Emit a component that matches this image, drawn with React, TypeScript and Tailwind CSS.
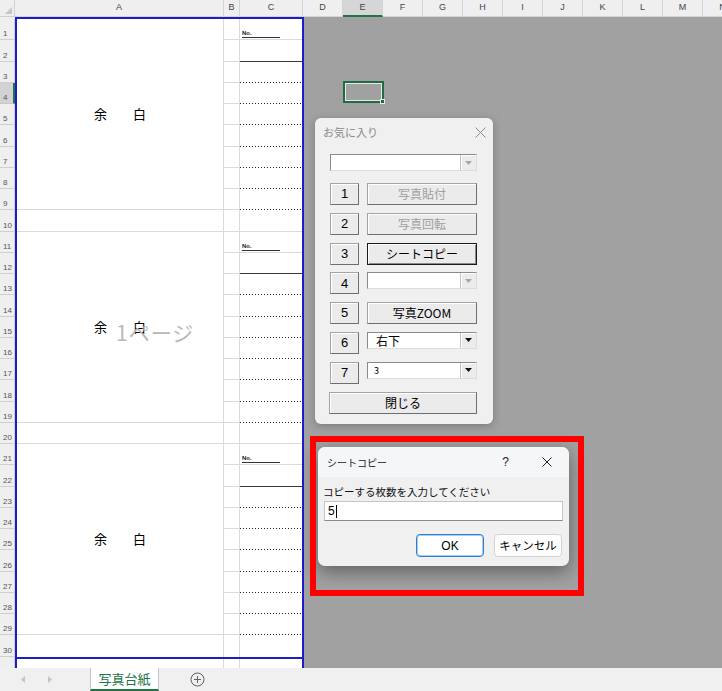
import React from 'react';

const COLS = ['D', 'E', 'F', 'G', 'H', 'I', 'J', 'K', 'L', 'M', 'N'];
const ROWS = Array.from({ length: 31 }, (_, i) => i + 1);

const Arrow: React.FC<{ disabled?: boolean }> = ({ disabled }) => (
  <div className="flex h-full w-[16px] items-center justify-center border-l border-[#c4c4c4] bg-[#ececec] shadow-[inset_1px_1px_0_#ffffff]">
    <svg width="7" height="4" viewBox="0 0 7 4">
      <path d="M0 0 L7 0 L3.5 4 Z" fill={disabled ? '#a8a8a8' : '#111111'} />
    </svg>
  </div>
);

const Combo: React.FC<{ value?: string; disabled?: boolean; small?: boolean }> = ({ value, disabled, small }) => (
  <div className="flex h-[17px] w-full border border-[#8a8a8a] border-b-[#dcdcdc] border-r-[#dcdcdc] bg-white">
    <div className={small ? 'flex-1 pl-[6px] text-[9px] leading-[15px] text-black' : 'flex-1 pl-[8px] text-[12px] leading-[15px] text-black'}>
      {value}
    </div>
    <Arrow disabled={disabled} />
  </div>
);

const NumBtn: React.FC<{ n: number }> = ({ n }) => (
  <div className="flex h-[22px] w-[29px] shrink-0 items-center justify-center border border-[#a4a4a4] border-b-[#6e6e6e] border-r-[#6e6e6e] bg-[#ebebeb] font-['Liberation_Sans',sans-serif] text-[13px] text-black shadow-[inset_1px_1px_0_#ffffff]">
    {n}
  </div>
);

const ActBtn: React.FC<{ label: string; disabled?: boolean; def?: boolean }> = ({ label, disabled, def }) => {
  if (def) {
    return (
      <div className="flex h-[22px] flex-1 items-center justify-center border border-[#1a1a1a] bg-[#ebebeb] text-[12px] text-black shadow-[inset_1px_1px_0_#ffffff,inset_-1px_-1px_0_#8a8a8a]">
        {label}
      </div>
    );
  }
  return (
    <div
      className={
        disabled
          ? 'flex h-[22px] flex-1 items-center justify-center border border-[#a4a4a4] border-b-[#6e6e6e] border-r-[#6e6e6e] bg-[#ebebeb] text-[12px] text-[#a0a0a0] shadow-[inset_1px_1px_0_#ffffff]'
          : 'flex h-[22px] flex-1 items-center justify-center border border-[#a4a4a4] border-b-[#6e6e6e] border-r-[#6e6e6e] bg-[#ebebeb] text-[12px] text-black shadow-[inset_1px_1px_0_#ffffff]'
      }
    >
      {label}
    </div>
  );
};

// column C: "No." line, a solid rule, then dotted writing lines
const ColC: React.FC<{ i: number }> = ({ i }) => {
  const r = i % 10;
  if (r === 0) {
    return (
      <div className="flex h-[21.25px] items-end border-b border-[#dadada] pb-[1px] pl-[2px]">
        <div className="w-[38px] border-b border-[#333333] font-['Liberation_Sans',sans-serif] text-[6px] font-bold leading-[7px] text-[#222]">
          No.
        </div>
      </div>
    );
  }
  if (r === 1) return <div className="h-[21.25px] border-b border-[#3a3a3a]" />;
  if (r === 9) return <div className={i === 29 ? 'h-[21.25px]' : 'h-[21.25px] border-b border-[#dadada]'} />;
  return (
    <div className="flex h-[21.25px] flex-col justify-end">
      <div className="h-[1px] bg-[repeating-linear-gradient(90deg,#222222_0_1.5px,transparent_1.5px_3px)]" />
    </div>
  );
};

const Yohaku = () => (
  <div className="flex h-[191.25px] items-center justify-center border-b border-[#dadada] text-[13px] text-black">
    余　　白
  </div>
);

export default function App() {
  return (
    <div className="relative flex h-[691px] w-[722px] flex-col overflow-hidden bg-white font-['Noto_Sans_CJK_JP',sans-serif]">
      {/* column header */}
      <div className="flex h-[17px] shrink-0 overflow-hidden bg-[#efefef] font-['Liberation_Sans',sans-serif] text-[9px] text-[#444]">
        <div className="relative w-[15px] shrink-0 border-r border-b border-[#cfcfcf]">
          <svg className="absolute bottom-[2px] right-[2px]" width="7" height="7" viewBox="0 0 7 7">
            <path d="M7 0 L7 7 L0 7 Z" fill="#c6c6c6" />
          </svg>
        </div>
        <div className="flex w-[209px] shrink-0 items-center justify-center border-r border-b border-[#d4d4d4]">A</div>
        <div className="flex w-[16px] shrink-0 items-center justify-center border-r border-b border-[#d4d4d4]">B</div>
        <div className="flex w-[63px] shrink-0 items-center justify-center border-r border-b border-[#d4d4d4]">C</div>
        {COLS.map((c) => (
          <div
            key={c}
            className={
              c === 'E'
                ? 'flex w-[40px] shrink-0 items-center justify-center border-r border-b-2 border-r-[#d4d4d4] border-b-[#217346] bg-[#d6d6d6]'
                : 'flex w-[40px] shrink-0 items-center justify-center border-r border-b border-[#d4d4d4]'
            }
          >
            {c}
          </div>
        ))}
      </div>

      {/* body */}
      <div className="flex h-[651px] shrink-0 overflow-hidden">
        <div className="w-[15px] shrink-0 bg-[#efefef] pt-[2px] font-['Liberation_Sans',sans-serif] text-[8px] text-[#555]">
          {ROWS.map((n) => (
            <div
              key={n}
              className={
                n === 4
                  ? 'flex h-[21.25px] items-end border-b border-r-2 border-b-[#c8c8c8] border-r-[#217346] bg-[#d2d2d2] pb-[1px] pl-[3px] leading-none'
                  : 'flex h-[21.25px] items-end border-b border-r border-[#cfcfcf] pb-[1px] pl-[3px] leading-none'
              }
            >
              {n < 31 ? n : ''}
            </div>
          ))}
        </div>

        <div className="w-[289px] shrink-0">
          <div className="flex border-2 border-[#1c1cc8]">
            <div className="w-[207px] border-r border-[#dadada]">
              {[0, 1, 2].map((s) => (
                <React.Fragment key={s}>
                  <Yohaku />
                  <div className={s === 2 ? 'h-[21.25px]' : 'h-[21.25px] border-b border-[#dadada]'} />
                </React.Fragment>
              ))}
            </div>
            <div className="w-[16px] border-r border-[#dadada]">
              {Array.from({ length: 30 }, (_, i) => (
                <div key={i} className={i === 29 ? 'h-[21.25px]' : 'h-[21.25px] border-b border-[#dadada]'} />
              ))}
            </div>
            <div className="flex-1">
              {Array.from({ length: 30 }, (_, i) => (
                <ColC key={i} i={i} />
              ))}
            </div>
          </div>
          <div className="flex h-[21px] border-x-2 border-[#1c1cc8]">
            <div className="w-[207px] border-r border-[#dadada]" />
            <div className="w-[16px] border-r border-[#dadada]" />
            <div className="flex-1" />
          </div>
        </div>

        <div className="flex-1 bg-[#a1a1a1]" />
      </div>

      {/* sheet tabs */}
      <div className="flex h-[23px] shrink-0 items-stretch bg-[#f0f0f0]">
        <div className="flex w-[90px] items-center gap-[23px] pl-[21px]">
          <svg width="4" height="7" viewBox="0 0 4 7">
            <path d="M4 0 L0 3.5 L4 7 Z" fill="#c4c4c4" />
          </svg>
          <svg width="4" height="7" viewBox="0 0 4 7">
            <path d="M0 0 L4 3.5 L0 7 Z" fill="#c4c4c4" />
          </svg>
        </div>
        <div className="flex w-[69px] items-center justify-center border-x border-b-2 border-x-[#c6c6c6] border-b-[#217346] bg-white text-[13px] text-[#217346]">
          写真台紙
        </div>
        <div className="flex w-[76px] items-center justify-center">
          <svg width="15" height="15" viewBox="0 0 15 15">
            <circle cx="7.5" cy="7.5" r="6.5" fill="none" stroke="#606060" strokeWidth="1" />
            <path d="M7.5 4 V11 M4 7.5 H11" stroke="#606060" strokeWidth="1" />
          </svg>
        </div>
        <div className="flex-1" />
      </div>

      {/* page-break preview watermark */}
      <div className="absolute left-[116px] top-[318px] text-[21px] leading-[28px] tracking-[1px] text-[#b8b8b8]">
        1ページ
      </div>

      {/* selected cell E4 */}
      <div className="absolute left-[343px] top-[81px] h-[22px] w-[41px] border-2 border-[#1f6b43] shadow-[inset_0_0_0_1px_#e8e8e8]" />
      <div className="absolute left-[380px] top-[99px] h-[5px] w-[5px] border border-[#e8e8e8] bg-[#1f6b43]" />

      {/* お気に入り */}
      <div className="absolute left-[315px] top-[118px] flex h-[306px] w-[178px] flex-col rounded-[6px] bg-[#f0f0f0] shadow-[0_2px_8px_rgba(0,0,0,0.25)]">
        <div className="flex h-[28px] shrink-0 items-center pl-[8px] pr-[7px]">
          <span className="text-[11px] text-[#8a8a8a]">お気に入り</span>
          <svg className="ml-auto" width="11" height="11" viewBox="0 0 11 11">
            <path d="M0.5 0.5 L10.5 10.5 M10.5 0.5 L0.5 10.5" stroke="#8a8a8a" strokeWidth="1" />
          </svg>
        </div>
        <div className="flex flex-col pl-[15px] pr-[16px]">
          <div className="mt-[8px]">
            <Combo disabled />
          </div>
          <div className="mt-[12px] flex flex-col gap-[7.8px]">
            <div className="flex gap-[8px]">
              <NumBtn n={1} />
              <ActBtn label="写真貼付" disabled />
            </div>
            <div className="flex gap-[8px]">
              <NumBtn n={2} />
              <ActBtn label="写真回転" disabled />
            </div>
            <div className="flex gap-[8px]">
              <NumBtn n={3} />
              <ActBtn label="シートコピー" def />
            </div>
            <div className="flex gap-[8px]">
              <NumBtn n={4} />
              <div className="flex-1">
                <Combo disabled />
              </div>
            </div>
            <div className="flex gap-[8px]">
              <NumBtn n={5} />
              <ActBtn label="写真ZOOM" />
            </div>
            <div className="flex gap-[8px]">
              <NumBtn n={6} />
              <div className="flex-1">
                <Combo value="右下" />
              </div>
            </div>
            <div className="flex gap-[8px]">
              <NumBtn n={7} />
              <div className="flex-1">
                <Combo value="3" small />
              </div>
            </div>
            <div className="-ml-[1px] flex">
              <ActBtn label="閉じる" />
            </div>
          </div>
        </div>
      </div>

      {/* シートコピー dialog */}
      <div className="absolute left-[318px] top-[447px] flex h-[119px] w-[251px] flex-col overflow-hidden rounded-[7px] bg-[#f0f0f0] shadow-[0_6px_18px_rgba(0,0,0,0.4)]">
        <div className="flex h-[30px] shrink-0 items-center bg-[#f4f6f8] pl-[9px] pr-[17px]">
          <span className="text-[10px] text-[#222]">シートコピー</span>
          <span className="ml-auto mr-[33px] font-['Liberation_Sans',sans-serif] text-[12px] text-[#222]">?</span>
          <svg width="10" height="10" viewBox="0 0 10 10">
            <path d="M0.5 0.5 L9.5 9.5 M9.5 0.5 L0.5 9.5" stroke="#222" strokeWidth="1" />
          </svg>
        </div>
        <div className="flex flex-col pl-[6px] pr-[6px] pt-[8px]">
          <div className="-ml-[1px] text-[10.5px] leading-[14px] text-[#111]">コピーする枚数を入力してください</div>
          <div className="mt-[2px] flex h-[20px] items-center border border-[#c4c4c4] border-b-[#8a8a8a] bg-white pl-[3px] font-['Liberation_Sans',sans-serif] text-[12px] text-black">
            5<span className="ml-[1px] h-[13px] w-[1px] bg-black" />
          </div>
          <div className="mt-[13px] flex justify-end gap-[10px] pr-[1px]">
            <div className="flex h-[23px] w-[68px] items-center justify-center rounded-[4px] border border-[#2f7fd0] bg-white font-['Liberation_Sans',sans-serif] text-[12px] text-black shadow-[inset_0_0_0_1px_#a9cdf0]">
              OK
            </div>
            <div className="flex h-[23px] w-[68px] items-center justify-center rounded-[4px] border border-[#d2d2d2] bg-[#fdfdfd] text-[11.5px] text-black">
              キャンセル
            </div>
          </div>
        </div>
      </div>

      {/* red annotation frame */}
      <div className="absolute left-[310px] top-[436px] h-[160px] w-[274px] border-[6px] border-[#ff0000]" />
    </div>
  );
}
